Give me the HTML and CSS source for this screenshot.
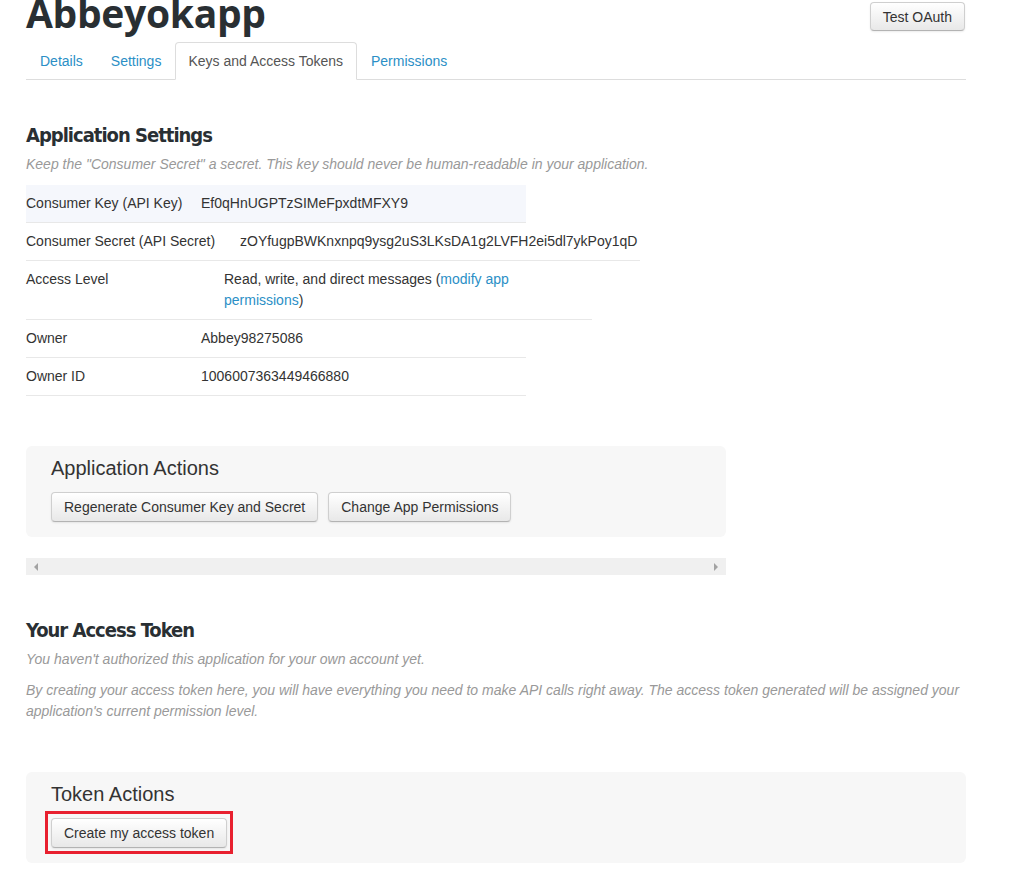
FILE: index.html
```html
<!DOCTYPE html>
<html>
<head>
<meta charset="utf-8">
<link rel="stylesheet" href="styles.css">
</head>
<body>
<div class="page">
  <div class="header">
    <h1 class="app-title">Abbeyokapp</h1>
    <button class="btn">Test OAuth</button>
  </div>
  <ul class="tabs">
    <li class="tab"><a>Details</a></li>
    <li class="tab"><a>Settings</a></li>
    <li class="tab active"><a>Keys and Access Tokens</a></li>
    <li class="tab"><a>Permissions</a></li>
  </ul>

  <h2 class="section-title first">Application Settings</h2>
  <p class="note">Keep the "Consumer Secret" a secret. This key should never be human-readable in your application.</p>

  <div class="rows">
    <div class="row row-key"><span class="label">Consumer Key (API Key)</span><span class="value">Ef0qHnUGPTzSIMeFpxdtMFXY9</span></div>
    <div class="row row-secret"><span class="label">Consumer Secret (API Secret)</span><span class="value">zOYfugpBWKnxnpq9ysg2uS3LKsDA1g2LVFH2ei5dl7ykPoy1qD</span></div>
    <div class="row row-access"><span class="label">Access Level</span><span class="value">Read, write, and direct messages (<a class="link">modify app permissions</a>)</span></div>
    <div class="row row-owner"><span class="label">Owner</span><span class="value">Abbey98275086</span></div>
    <div class="row row-owner"><span class="label">Owner ID</span><span class="value">1006007363449466880</span></div>
  </div>

  <div class="panel panel-app">
    <h3 class="panel-title">Application Actions</h3>
    <div class="actions">
      <button class="btn">Regenerate Consumer Key and Secret</button>
      <button class="btn">Change App Permissions</button>
    </div>
  </div>

  <div class="hscroll">
    <span class="arrow arrow-left"></span>
    <span class="arrow arrow-right"></span>
  </div>

  <h2 class="section-title second">Your Access Token</h2>
  <p class="note">You haven't authorized this application for your own account yet.</p>
  <p class="note para">By creating your access token here, you will have everything you need to make API calls right away. The access token generated will be assigned your application's current permission level.</p>

  <div class="panel panel-token">
    <h3 class="panel-title">Token Actions</h3>
    <div class="actions">
      <span class="highlight"><button class="btn">Create my access token</button></span>
    </div>
  </div>
</div>
</body>
</html>
```
FILE: styles.css
```css
* { box-sizing: border-box; }
html, body { margin: 0; padding: 0; background: #fff; }
body {
  font-family: "Liberation Sans", Arial, sans-serif;
  font-size: 14px;
  color: #333;
  overflow: hidden;
}
.page {
  width: 940px;
  margin-left: 26px;
}
.header {
  display: flex;
  justify-content: space-between;
  align-items: flex-start;
  height: 42px;
}
.app-title {
  margin: -9px 0 0 0;
  font-family: "Open Sans", sans-serif;
  font-weight: 700;
  font-size: 39px;
  line-height: 44px;
  color: #292f33;
  letter-spacing: -0.3px;
}
.btn {
  font-family: "Liberation Sans", Arial, sans-serif;
  font-size: 14px;
  color: #333;
  height: 30px;
  padding: 0 12px;
  background: linear-gradient(#ffffff, #e8e8e8);
  border: 1px solid #cfcfcf;
  border-bottom-color: #b3b3b3;
  border-radius: 4px;
  box-shadow: 0 1px 2px rgba(0,0,0,0.08);
  line-height: 28px;
}
.header .btn { margin-top: 2px; margin-right: 1px; height: 29px; padding: 0 12px; }

.tabs {
  list-style: none;
  margin: 0;
  padding: 0;
  display: flex;
  border-bottom: 1px solid #ddd;
  height: 38px;
}
.tab a {
  display: block;
  height: 38px;
  padding: 0 13px;
  line-height: 36px;
  color: #2b8fc6;
  border: 1px solid transparent;
  border-radius: 4px 4px 0 0;
}
.tab.active a {
  color: #555;
  background: #fff;
  border-color: #ddd;
  border-bottom-color: #fff;
  padding: 0 13px 0 12px;
}

.section-title {
  font-family: "DejaVu Sans", sans-serif;
  font-stretch: condensed;
  font-weight: 700;
  font-size: 20px;
  line-height: 26px;
  color: #292f33;
  margin: 0;
  letter-spacing: -1px;
}
.section-title.first { margin-top: 42px; }
.section-title.second { margin-top: 42px; }
.note {
  font-style: italic;
  color: #999;
  margin: 6px 0 0 0;
  line-height: 21px;
}
.note.para { margin-top: 10px; }

.rows { margin-top: 10px; }
.row {
  display: flex;
  border-bottom: 1px solid #e8e8e8;
  padding: 8px 0;
  line-height: 21px;
}
.row .label { flex: none; }
.row-key { width: 500px; background: #f5f7fc; }
.row-key .label { width: 175px; }
.row-secret { width: 614px; }
.row-secret .label { width: 214px; }
.row-access { width: 566px; }
.row-access .label { width: 198px; }
.row-owner { width: 500px; }
.row-owner .label { width: 175px; }
.link { color: #2b8fc6; }

.panel {
  background: #f7f7f7;
  border-radius: 6px;
  padding: 9px 25px 15px;
}
.panel-title {
  margin: 0;
  font-family: "Liberation Sans", Arial, sans-serif;
  font-weight: 400;
  font-size: 20px;
  line-height: 26px;
  color: #333;
}
.actions {
  display: flex;
  gap: 10px;
  margin-top: 11px;
}
.panel-app { width: 700px; margin-top: 50px; height: 91px; }
.panel-token { width: 940px; margin-top: 50px; height: 91px; padding-top: 9px; }
.panel-token .actions { margin-top: 11px; }

.hscroll {
  width: 700px;
  height: 17px;
  margin-top: 21px;
  background: #f0f0f0;
  display: flex;
  justify-content: space-between;
  align-items: center;
  padding: 0 6px;
}
.arrow {
  width: 0; height: 0;
  border-top: 4px solid transparent;
  border-bottom: 4px solid transparent;
}
.arrow-left { border-right: 4px solid #a3a3a3; margin-left: 2px; }
.arrow-right { border-left: 4px solid #a3a3a3; margin-right: 2px; }

.highlight {
  display: inline-block;
  border: 3px solid #e8202f;
  padding: 4px 3px 3px 3px;
  margin: -7px 0 0 -6px;
}
.highlight .btn { display: block; height: 30px; }
```
